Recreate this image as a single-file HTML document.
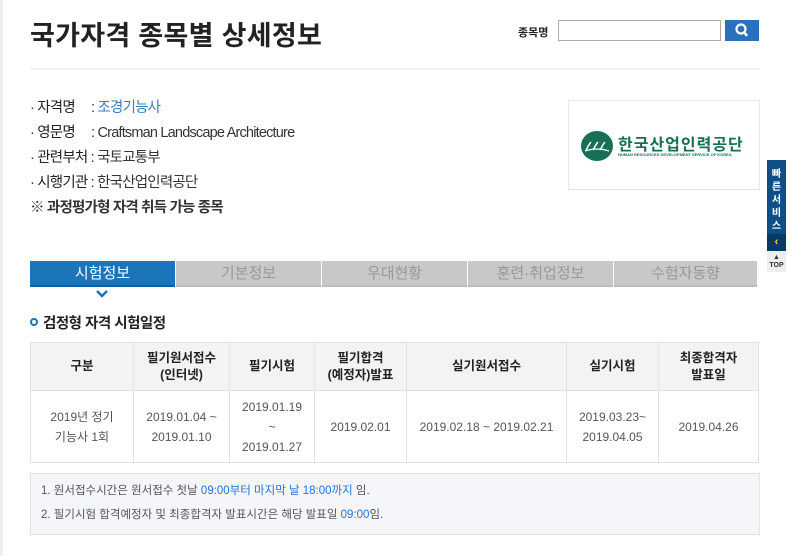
<!DOCTYPE html>
<html><head><meta charset="utf-8"><style>
*{margin:0;padding:0;box-sizing:border-box}
body{width:800px;height:556px;background:#fff;font-family:"Liberation Sans","Noto Sans CJK KR",sans-serif;position:relative;overflow:hidden;color:#333}
.a{position:absolute}
.lb{left:0;top:0;width:3px;height:556px;background:#eee}
h1{position:absolute;left:30px;top:14px;font-size:27px;font-weight:bold;color:#222;letter-spacing:0.3px}
.info{left:30px;top:96px;font-size:14.5px;line-height:25px;color:#333;letter-spacing:-0.8px}
.info b{font-weight:normal;color:#222;display:inline-block}
table{position:absolute;left:30px;top:342px;width:729px;border-collapse:collapse;font-size:12px;text-align:center}
th{background:#f3f3f3;height:48px;font-weight:bold;color:#222;border:1px solid #e2e2e2;font-size:12.5px;line-height:17px}
td{height:72px;border:1px solid #e2e2e2;color:#555;line-height:20px}
.tab{top:261px;height:26px;width:145px;background:#c8c8c8;color:#999;font-size:15px;text-align:center;line-height:25px;border-bottom:2px solid #bbb}
</style></head><body>
<div class="a lb"></div>
<h1>국가자격 종목별 상세정보</h1>
<div class="a" style="left:518px;top:24px;font-size:11px;font-weight:bold;color:#222">종목명</div>
<div class="a" style="left:558px;top:20px;width:163px;height:21px;border:1px solid #aaa;background:#fff"></div>
<div class="a" style="left:725px;top:20px;width:34px;height:21px;background:#2d6fbf">
<svg width="34" height="21"><circle cx="16" cy="9" r="4.5" fill="none" stroke="#fff" stroke-width="2.2"/><line x1="19" y1="12" x2="22" y2="16" stroke="#fff" stroke-width="2.5"/></svg></div>
<div class="a" style="left:30px;top:68px;width:730px;height:2px;background:#f0f0f0"></div>
<div class="a info">
<div>· <b>자격명&nbsp;&nbsp;&nbsp;&nbsp;</b> : <span style="color:#3a7bc8">조경기능사</span></div>
<div>· <b>영문명&nbsp;&nbsp;&nbsp;&nbsp;</b> : Craftsman Landscape Architecture</div>
<div>· <b>관련부처</b> : 국토교통부</div>
<div>· <b>시행기관</b> : 한국산업인력공단</div>
<div style="font-weight:bold">※ 과정평가형 자격 취득 가능 종목</div>
</div>
<div class="a" style="left:568px;top:100px;width:192px;height:90px;border:1px solid #e6e6e6">
<div class="a" style="left:12px;top:30px;width:32px;height:30px;border-radius:50%;background:#176f55"></div>
<svg class="a" style="left:14px;top:38px" width="28" height="14"><path d="M3 11c2-3 3-6 5-8M10 11c2-3 3-6 5-8M17 11c2-3 3-6 5-8" stroke="#fff" stroke-width="1.5" fill="none"/><path d="M2 12q12-4 24 0" stroke="#fff" stroke-width="1.3" fill="none"/></svg>
<div class="a" style="left:49px;top:30px;font-size:16px;font-weight:bold;color:#176f55;letter-spacing:1px">한국산업인력공단</div>
<div class="a" style="left:49px;top:51px;font-size:4px;font-weight:bold;color:#176f55;white-space:nowrap">HUMAN RESOURCES DEVELOPMENT SERVICE OF KOREA</div>
</div>
<div class="a" style="left:767px;top:160px;width:19px;height:76px;background:#0d4f86;color:#fff;font-size:10px;font-weight:bold;text-align:center;line-height:13px;padding-top:8px">빠<br>른<br>서<br>비<br>스</div>
<div class="a" style="left:767px;top:234px;width:19px;height:17px;background:#073b63;color:#ffe600;font-size:11px;font-weight:bold;text-align:center;line-height:17px">‹</div>
<div class="a" style="left:767px;top:251px;width:19px;height:21px;background:#eee;font-size:7px;font-weight:bold;text-align:center;line-height:8px;padding-top:3px;color:#333">▲<br>TOP</div>
<div class="a tab" style="left:30px;background:#1c75b8;color:#fff;border-bottom-color:#155e96">시험정보</div>
<div class="a tab" style="left:176px">기본정보</div>
<div class="a tab" style="left:322px">우대현황</div>
<div class="a tab" style="left:468px">훈련·취업정보</div>
<div class="a tab" style="left:614px;width:143px">수험자동향</div>
<svg class="a" style="left:96px;top:290px" width="12" height="8"><polyline points="1,1 6,6 11,1" fill="none" stroke="#1c75b8" stroke-width="2.5"/></svg>
<div class="a" style="left:30px;top:318px;width:8px;height:8px;border:2px solid #1c75b8;border-radius:50%"></div>
<div class="a" style="left:43px;top:312px;font-size:14.5px;font-weight:bold;color:#222;letter-spacing:-0.5px">검정형 자격 시험일정</div>
<table>
<tr><th style="width:103px">구분</th><th style="width:96px">필기원서접수<br>(인터넷)</th><th style="width:85px">필기시험</th><th style="width:92px">필기합격<br>(예정자)발표</th><th style="width:160px">실기원서접수</th><th style="width:92px">실기시험</th><th>최종합격자<br>발표일</th></tr>
<tr><td>2019년 정기<br>기능사 1회</td><td>2019.01.04 ~<br>2019.01.10</td><td>2019.01.19<br>~<br>2019.01.27</td><td>2019.02.01</td><td>2019.02.18 ~ 2019.02.21</td><td>2019.03.23~<br>2019.04.05</td><td>2019.04.26</td></tr>
</table>
<div class="a" style="left:30px;top:473px;width:730px;height:62px;background:#f5f6fa;border:1px solid #e3e3e3;font-size:11.5px;color:#555;line-height:24px;padding:5px 0 0 10px">
<div>1. 원서접수시간은 원서접수 첫날 <span style="color:#2a6de0">09:00부터 마지막 날 18:00까지</span> 임.</div>
<div>2. 필기시험 합격예정자 및 최종합격자 발표시간은 해당 발표일 <span style="color:#2a6de0">09:00</span>임.</div>
</div>
</body></html>
